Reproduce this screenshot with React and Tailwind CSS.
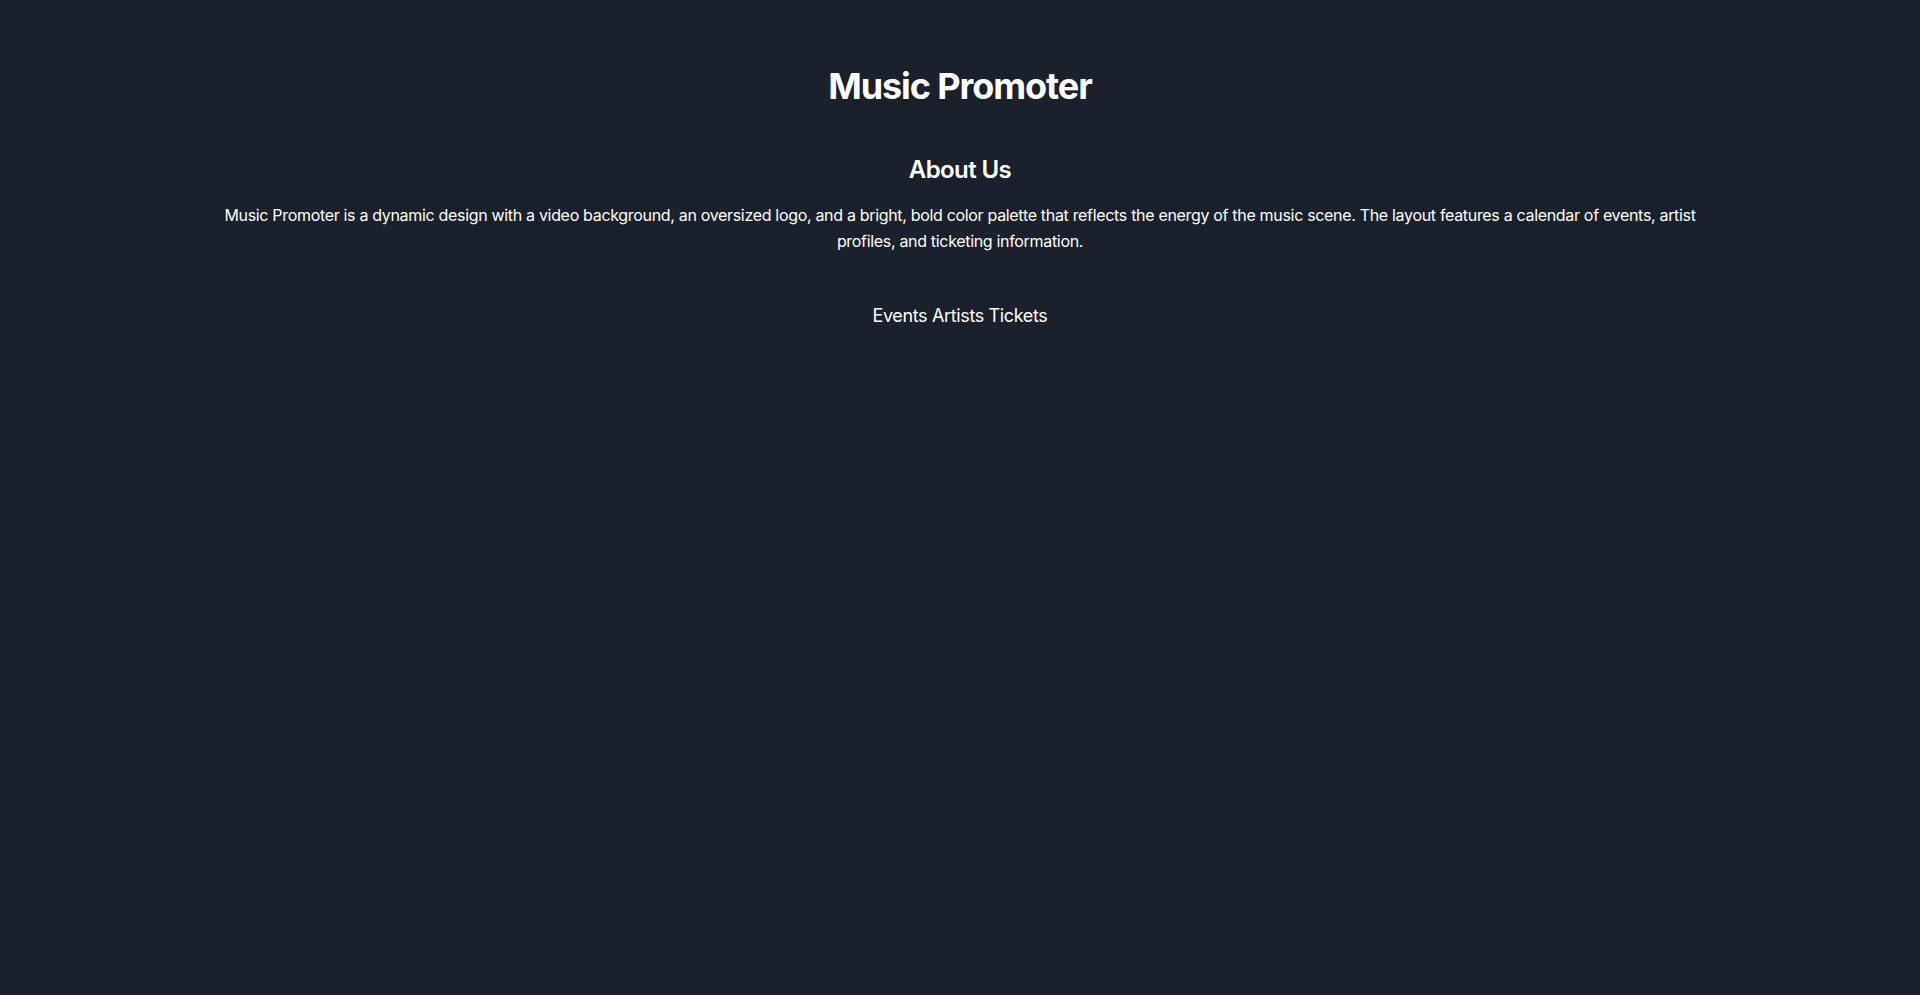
export default function App() {
  return (
    <div className="min-h-screen bg-[#1a202c] text-white" style={{ fontFamily: "Inter, 'Noto Sans', sans-serif" }}>
      <div className="container mx-auto px-4 text-center">
        <header className="pt-[66px] pb-12">
          <h1 className="text-4xl font-bold tracking-[-0.03em]">Music Promoter</h1>
        </header>
        <section className="mb-12">
          <h2 className="mb-4 text-2xl font-semibold tracking-[-0.025em]">About Us</h2>
          <p className="text-base leading-relaxed tracking-[-0.02em]">
            Music Promoter is a dynamic design with a video background, an oversized logo, and a bright, bold color palette that reflects the energy of the music scene. The layout features a calendar of events, artist profiles, and ticketing information.
          </p>
        </section>
        <nav className="text-lg tracking-[-0.02em]">
          <a href="#">Events</a> <a href="#">Artists</a> <a href="#">Tickets</a>
        </nav>
      </div>
    </div>
  );
}
